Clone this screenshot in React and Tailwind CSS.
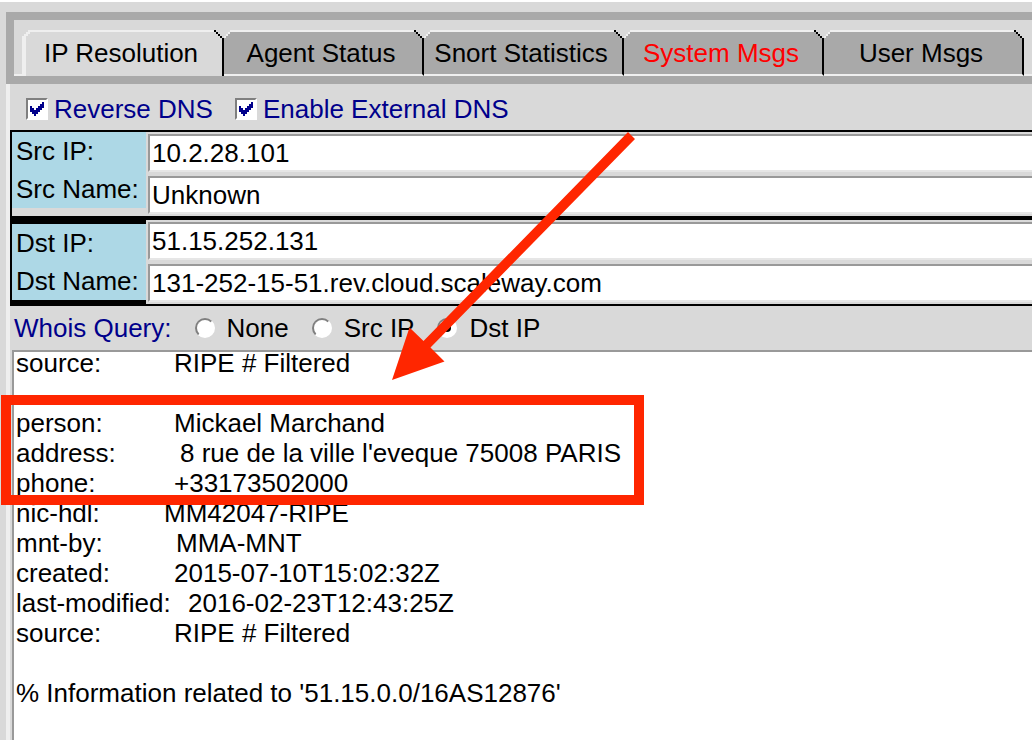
import React, { useState } from "react";

const TABS = [
  { name: "IP Resolution", alert: false },
  { name: "Agent Status", alert: false },
  { name: "Snort Statistics", alert: false },
  { name: "System Msgs", alert: true },
  { name: "User Msgs", alert: false },
];

const WHOIS = [
  ["source:", "RIPE # Filtered", "w-[158px]"],
  null,
  ["person:", "Mickael Marchand", "w-[158px]"],
  ["address:", "8 rue de la ville l'eveque 75008 PARIS", "w-[164px]"],
  ["phone:", "+33173502000", "w-[158px]"],
  ["nic-hdl:", "MM42047-RIPE", "w-[148px]"],
  ["mnt-by:", "MMA-MNT", "w-[160px]"],
  ["created:", "2015-07-10T15:02:32Z", "w-[158px]"],
  ["last-modified:", "2016-02-23T12:43:25Z", "w-[172px]"],
  ["source:", "RIPE # Filtered", "w-[158px]"],
];

function Tab({ tab, active, onSelect }) {
  return (
    <button
      type="button"
      role="tab"
      aria-selected={active}
      onClick={onSelect}
      className={
        "relative flex h-full shrink-0 items-center justify-center whitespace-nowrap border-t-2 border-t-[#efefef] border-r-2 border-r-black " +
        (active
          ? "w-[202px] border-l-4 border-l-[#efefef] bg-[#d9d9d9] pr-1.5 pb-0.5 "
          : "w-[200px] border-b-2 border-b-[#efefef] bg-[#a9a9a9] pr-1 ") +
        (tab.alert ? "text-[#ff0000]" : "text-black")
      }
    >
      {tab.name}
      <svg
        className={"absolute -top-0.5 h-2 w-2 " + (active ? "-left-1" : "left-0")}
        viewBox="0 0 4 4"
        shapeRendering="crispEdges"
        aria-hidden="true"
      >
        <path d="M0 0H4V1H3V2H2V3H1V4H0Z" fill="#d9d9d9" />
        <path
          d={
            active
              ? "M3 0h1v2h-1v1h-1v1h-2v-1h1v-1h1v-1h1z"
              : "M3 0h1v1h-1zM2 1h1v1h-1zM1 2h1v1h-1zM0 3h1v1h-1z"
          }
          fill="#efefef"
        />
      </svg>
      <svg
        className="absolute -top-0.5 -right-0.5 h-2 w-2.5"
        viewBox="0 0 5 4"
        shapeRendering="crispEdges"
        aria-hidden="true"
      >
        <path d="M0 0H5V4H4V3H3V2H2V1H0Z" fill="#d9d9d9" />
        <path d="M0 0h1v1h-1zM1 1h1v1h-1zM2 2h1v1h-1zM3 3h1v1h-1z" fill="#000" />
      </svg>
    </button>
  );
}

function Check({ label, checked, onChange }) {
  return (
    <label className="flex items-center gap-1.5 text-[#00008b]">
      <span className="relative flex">
        <input
          type="checkbox"
          checked={checked}
          onChange={onChange}
          className="h-[22px] w-[22px] appearance-none border-2 border-t-[#7f7f7f] border-r-white border-b-white border-l-[#7f7f7f] bg-white"
        />
        {checked && (
          <svg
            className="pointer-events-none absolute top-1 left-1 h-3.5 w-3.5"
            viewBox="0 0 7 7"
            shapeRendering="crispEdges"
            aria-hidden="true"
          >
            <path
              d="M6 0H7V3H6V4H5V5H4V6H3V7H2V6H1V5H0V2H1V3H2V4H3V3H4V2H5V1H6Z"
              fill="#00008b"
            />
          </svg>
        )}
      </span>
      {label}
    </label>
  );
}

function Entry({ id, defaultValue }) {
  return (
    <div className="bg-[#d9d9d9] p-0.5 pr-0">
      <input
        id={id}
        type="text"
        defaultValue={defaultValue}
        className="block h-[38px] w-full border-t-2 border-b-2 border-l-2 border-t-[#999999] border-b-[#e6e6e6] border-l-[#999999] bg-white px-0.5 text-black outline-none"
      />
    </div>
  );
}

function Host({ prefix, ip, name, spaced }) {
  const id = prefix.toLowerCase();
  return (
    <div className={"flex " + (spaced ? "bg-[#d9d9d9]" : "bg-black")}>
      <div className={"w-[134px] shrink-0 " + (spaced ? "" : "pt-1")}>
        <div className="flex h-[76px] flex-col bg-[#add8e6] pl-1 leading-[38px] whitespace-nowrap">
          <label htmlFor={id + "-ip"}>{prefix} IP:</label>
          <label htmlFor={id + "-name"}>{prefix} Name:</label>
        </div>
      </div>
      <div className="min-w-0 grow">
        <Entry id={id + "-ip"} defaultValue={ip} />
        <Entry id={id + "-name"} defaultValue={name} />
      </div>
    </div>
  );
}

function Radio({ label, value, selected, onSelect }) {
  return (
    <label className="flex items-center gap-3">
      <span className="relative flex">
        <input
          type="radio"
          name="whois"
          value={value}
          checked={selected}
          onChange={onSelect}
          className="h-5 w-5 appearance-none rounded-full border-2 border-t-[#7f7f7f] border-r-white border-b-white border-l-[#7f7f7f] bg-white"
        />
        {selected && (
          <span className="pointer-events-none absolute top-1.5 left-1.5 h-2 w-2 rounded-full bg-black" />
        )}
      </span>
      {label}
    </label>
  );
}

export default function App() {
  const [tab, setTab] = useState("IP Resolution");
  const [reverse, setReverse] = useState(true);
  const [external, setExternal] = useState(true);
  const [query, setQuery] = useState("dst");

  return (
    <main className="relative flex min-h-screen flex-col overflow-hidden border-t-2 border-white bg-[#d9d9d9] pt-2.5 pl-1.5 font-['Liberation_Sans',Arial,sans-serif] text-[26px] leading-[30px] text-black">
      <div className="border-8 border-r-0 border-[#a9a9a9]">
        <div role="tablist" className="flex h-14 overflow-hidden pt-2.5">
          <div className="w-2 shrink-0 border-b-2 border-[#efefef]" />
          {TABS.map((t) => (
            <Tab key={t.name} tab={t} active={t.name === tab} onSelect={() => setTab(t.name)} />
          ))}
          <div className="grow border-b-2 border-[#efefef]" />
        </div>
      </div>

      <div className="flex grow flex-col border-l-4 border-[#efefef]">
        <div className="flex h-[46px] items-center gap-[22px] pt-1 pl-4">
          <Check label="Reverse DNS" checked={reverse} onChange={() => setReverse(!reverse)} />
          <Check label="Enable External DNS" checked={external} onChange={() => setExternal(!external)} />
        </div>

        <section className="flex flex-col gap-1 border-t-2 border-b-2 border-l-2 border-black bg-black">
          <Host prefix="Src" ip="10.2.28.101" name="Unknown" spaced />
          <Host prefix="Dst" ip="51.15.252.131" name="131-252-15-51.rev.cloud.scaleway.com" />
        </section>

        <div role="radiogroup" aria-labelledby="whois-label" className="flex h-11 items-center gap-[23px] pl-1">
          <span id="whois-label" className="text-[#00008b]">Whois Query:</span>
          <Radio label="None" value="none" selected={query === "none"} onSelect={() => setQuery("none")} />
          <Radio label="Src IP" value="src" selected={query === "src"} onSelect={() => setQuery("src")} />
          <Radio label="Dst IP" value="dst" selected={query === "dst"} onSelect={() => setQuery("dst")} />
        </div>

        <section className="ml-0.5 grow border-t-2 border-l-2 border-[#999999] bg-white pl-0.5">
          <div className="-mt-1">
            {WHOIS.map((row, i) =>
              row ? (
                <div key={i} className="flex whitespace-nowrap">
                  <span className={"shrink-0 " + row[2]}>{row[0]}</span>
                  <span>{row[1]}</span>
                </div>
              ) : (
                <div key={i} className="h-[30px]" />
              )
            )}
            <p className="mt-[30px]">% Information related to '51.15.0.0/16AS12876'</p>
          </div>
        </section>
      </div>

      <div className="pointer-events-none absolute top-[393px] left-px h-[110px] w-[643px] border-10 border-[#ff2600]" />
      <svg
        className="pointer-events-none absolute top-[128px] left-[390px] h-[252px] w-[248px]"
        viewBox="390 130 248 252"
        aria-hidden="true"
      >
        <path d="M628 132L635 139L430.500 347.500L444.500 361.500L392 380L409.500 327.500L423.500 341Z" fill="#ff2600" />
      </svg>
    </main>
  );
}
